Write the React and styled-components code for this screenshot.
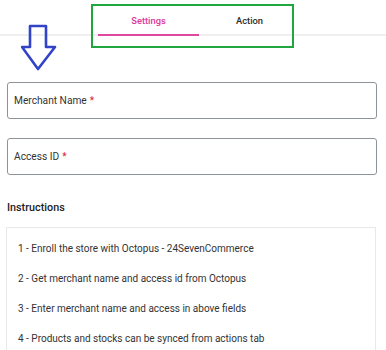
import React from "react";
import styled, { createGlobalStyle } from "styled-components";

const GlobalStyle = createGlobalStyle`
  body {
    margin: 0;
    background: #ffffff;
    font-family: Roboto, "Liberation Sans", Arial, sans-serif;
    color: #333;
  }
`;

const steps = [
  "1 - Enroll the store with Octopus - 24SevenCommerce",
  "2 - Get merchant name and access id from Octopus",
  "3 - Enter merchant name and access in above fields",
  "4 - Products and stocks can be synced from actions tab",
];

function DownArrow() {
  return (
    <svg width="36" height="48" viewBox="0 0 36 48">
      <path
        d="M9 2 H25 V23 H34 L17 45 L1 23 H9 Z"
        fill="none"
        stroke="#3343c8"
        strokeWidth="2.6"
        strokeLinejoin="round"
      />
    </svg>
  );
}

function App() {
  return (
    <>
      <GlobalStyle />
      <Page>
        <TabBar>
          <Tab active>Settings</Tab>
          <Tab>Action</Tab>
          <Highlight />
        </TabBar>
        <ArrowMark>
          <DownArrow />
        </ArrowMark>
        <Content>
          <Field>
            <span>Merchant Name</span>
            <Required>*</Required>
          </Field>
          <Field>
            <span>Access ID</span>
            <Required>*</Required>
          </Field>
          <Heading>Instructions</Heading>
          <StepList>
            {steps.map((s) => (
              <Step key={s}>{s}</Step>
            ))}
          </StepList>
        </Content>
      </Page>
    </>
  );
}

export default App;

const Page = styled.div`
  position: relative;
  width: 386px;
  height: 350px;
  overflow: hidden;
`;

const TabBar = styled.div`
  display: flex;
  height: 34px;
  padding-left: 98px;
  border-bottom: 2px solid #efefef;
`;

const Tab = styled.div`
  width: 101px;
  display: flex;
  align-items: center;
  justify-content: center;
  padding-top: 7px;
  box-sizing: border-box;
  align-self: stretch;
  font-size: 9.3px;
  font-weight: 500;
  margin-bottom: -2px;
  color: ${(p) => (p.active ? "#e0359a" : "#2b2b2b")};
  border-bottom: 2px solid ${(p) => (p.active ? "#e0479e" : "transparent")};
`;

const Highlight = styled.div`
  position: absolute;
  left: 91px;
  top: 4px;
  width: 203px;
  height: 44px;
  box-sizing: border-box;
  border: 2px solid #1fa63e;
`;

const ArrowMark = styled.div`
  position: absolute;
  left: 21px;
  top: 24px;
  line-height: 0;
`;

const Content = styled.div`
  padding: 46px 9px 0 7px;
  display: flex;
  flex-direction: column;
`;

const Field = styled.div`
  height: 37px;
  box-sizing: border-box;
  border: 1.5px solid #8e9399;
  border-radius: 3px;
  display: flex;
  align-items: center;
  padding-left: 6px;
  font-size: 10.2px;
  color: #333;
  margin-bottom: 19px;
`;

const Required = styled.span`
  color: #e0242e;
  margin-left: 3px;
`;

const Heading = styled.div`
  font-size: 10.8px;
  font-weight: 500;
  color: #222;
  margin-top: 7px;
  margin-bottom: 13px;
`;

const StepList = styled.div`
  border: 1px solid #e8e8e8;
  border-bottom: none;
  margin-left: -1px;
  margin-right: 1px;
  padding: 14px 0 0 11px;
  display: flex;
  flex-direction: column;
`;

const Step = styled.div`
  font-size: 10px;
  line-height: 14px;
  color: #333;
  margin-bottom: 16px;
`;
